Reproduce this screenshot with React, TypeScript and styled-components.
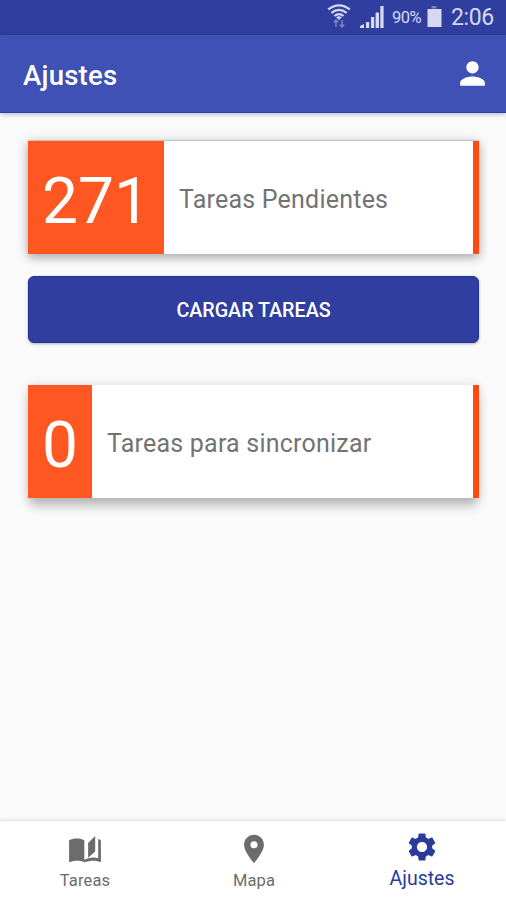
import React from "react";
import styled, { createGlobalStyle } from "styled-components";
import { MdPerson, MdLocationOn, MdSettings } from "react-icons/md";

const GlobalStyle = createGlobalStyle`
  * { box-sizing: border-box; }
  body { margin: 0; background: #fafafa; font-family: Roboto, sans-serif; }
`;

const Screen = styled.div`
  display: flex;
  flex-direction: column;
  width: 506px;
  height: 900px;
  overflow: hidden;
  background: #fafafa;
`;

const StatusBar = styled.div`
  display: flex;
  flex: none;
  justify-content: flex-end;
  height: 35px;
  padding-right: 12px;
  background: #303f9f;
  color: #d5d9f2;
  svg { flex: none; display: block; }
  svg + svg { margin-left: 9px; }
`;

const BatteryLevel = styled.span`
  width: 31px;
  margin: 0 4px 0 8px;
  font-size: 16.5px;
  line-height: 35px;
  letter-spacing: -0.5px;
  white-space: nowrap;
`;

const Clock = styled.span`
  width: 43px;
  margin-left: 9px;
  font-size: 23px;
  line-height: 35px;
  letter-spacing: -0.4px;
  white-space: nowrap;
`;

const AppBar = styled.header`
  display: flex;
  flex: none;
  align-items: center;
  justify-content: space-between;
  height: 78px;
  padding: 0 15px 0 23px;
  background: #3f51b5;
  border-bottom: 1px solid #2c3fa8;
  box-shadow: 0 1px 5px rgba(0, 0, 0, 0.28);
  color: #fff;
  z-index: 1;
  svg { display: block; margin-top: -1px; }
`;

const Title = styled.h1`
  margin: 4px 0 0;
  font-size: 27.5px;
  font-weight: 500;
  letter-spacing: 0.25px;
  line-height: 32px;
`;

const Content = styled.main`
  flex: 1;
  padding: 28px 27px 0 28px;
`;

const Card = styled.section<{ $raised?: boolean }>`
  display: flex;
  height: 113px;
  background: #fff;
  border-right: 6px solid #ff4a12;
  box-shadow: ${(p) =>
    p.$raised
      ? "0 10px 10px -2px rgba(0,0,0,.24), 0 0 10px rgba(0,0,0,.12)"
      : "0 4px 9px rgba(0,0,0,.25), 0 0 12px rgba(0,0,0,.13), 0 -1px 1px rgba(0,0,0,.12)"};
`;

const Count = styled.div`
  padding: 4px 14px 0;
  background: #ff5722;
  color: #fff;
  font-size: 64px;
  line-height: 113px;
`;

const CardLabel = styled.div`
  padding: 2px 0 0 15px;
  color: #737373;
  font-size: 25px;
  line-height: 113px;
  letter-spacing: 0.22px;
`;

const LoadButton = styled.button`
  display: block;
  width: 100%;
  height: 67px;
  margin: 22px 0 42px;
  padding: 2px 0 0;
  border: 1px solid #20309a;
  border-radius: 6px;
  background: #303f9f;
  box-shadow: 0 1px 3px rgba(0, 0, 0, 0.3);
  color: #fff;
  font: 500 19.7px/30px Roboto, sans-serif;
`;

const BottomNav = styled.nav`
  display: grid;
  grid-template-columns: 170px 1fr 168px;
  flex: none;
  height: 79px;
  background: #fff;
  box-shadow: 0 -1px 3px rgba(0, 0, 0, 0.12);
`;

const NavItem = styled.a<{ $active?: boolean }>`
  display: flex;
  flex-direction: column;
  align-items: center;
  padding-top: ${(p) => (p.$active ? 9 : 11)}px;
  color: ${(p) => (p.$active ? "#2c3a9c" : "#6c6c6c")};
  font-size: ${(p) => (p.$active ? 19.5 : 16.5)}px;
  letter-spacing: ${(p) => (p.$active ? 0 : 0.15)}px;
  line-height: 24px;
  svg { display: block; height: 34px; margin-bottom: 3px; }
`;

const WifiIcon = () => (
  <svg width="24" height="35" viewBox="0 0 24 35" fill="none" stroke="currentColor">
    <path d="M1.2 9.4Q12 1.2 22.8 9.4M4.4 12.8Q12 6.8 19.6 12.8M7.5 16Q12 12.4 16.5 16" strokeWidth="2.2" />
    <path d="M9.2 17.2Q12 15.4 14.8 17.2L12 20Z" fill="currentColor" stroke="none" />
    <path d="M9 27v-7M6.8 22.5L9 20l2.2 2.5M15 20v7M12.8 24.5L15 27l2.2-2.5" strokeWidth="1.5" opacity=".45" />
  </svg>
);

const SignalIcon = () => (
  <svg width="24" height="35" viewBox="0 0 24 35" fill="currentColor">
    <path d="M0 28v-2l4-2v4zM6 28v-6h3.2v6zM11 28V17h3.2v11zM15.6 28V12.5H19V28zM20.3 28V6h3.3v22z" />
  </svg>
);

const BatteryIcon = () => (
  <svg width="15" height="35" viewBox="0 0 15 35" fill="currentColor">
    <path d="M4.5 6h5v2.5h-5z" opacity=".45" />
    <path d="M.5 9h14v18H.5z" />
  </svg>
);

const BookIcon = () => (
  <svg width="34" height="34" viewBox="0 -1 25 25" fill="currentColor">
    <path d="M20 2l-5.2 5v11l5.2-4.7zM.8 5.2v15.5c0 .25.25.5.5.5l.25-.05C3.1 20.5 5.05 20.2 6.5 20.2c1.95 0 4.05.1 5.5 1.1V5.2C10.55 4.1 8.45 3.7 6.5 3.7S2.1 4.1.8 5.2zM24.2 5.2c-.6-.45-1.25-.75-2-1v14.1c-1.1-.35-2.3-.5-3.5-.5-1.7 0-4.7.65-6.7 1.7v1.8c1.8-.8 5-1.2 6.7-1.2 1.65 0 3.35.3 4.75 1 .25.1.75-.15.75-.45z" />
  </svg>
);

export default function App() {
  return (
    <>
      <GlobalStyle />
      <Screen>
        <StatusBar>
          <WifiIcon />
          <SignalIcon />
          <BatteryLevel>90%</BatteryLevel>
          <BatteryIcon />
          <Clock>2:06</Clock>
        </StatusBar>
        <AppBar>
          <Title>Ajustes</Title>
          <MdPerson size={37} />
        </AppBar>
        <Content>
          <Card>
            <Count>271</Count>
            <CardLabel>Tareas Pendientes</CardLabel>
          </Card>
          <LoadButton>CARGAR TAREAS</LoadButton>
          <Card $raised>
            <Count>0</Count>
            <CardLabel>Tareas para sincronizar</CardLabel>
          </Card>
        </Content>
        <BottomNav>
          <NavItem>
            <BookIcon />
            Tareas
          </NavItem>
          <NavItem>
            <MdLocationOn size={34} />
            Mapa
          </NavItem>
          <NavItem $active>
            <MdSettings size={34} />
            Ajustes
          </NavItem>
        </BottomNav>
      </Screen>
    </>
  );
}
